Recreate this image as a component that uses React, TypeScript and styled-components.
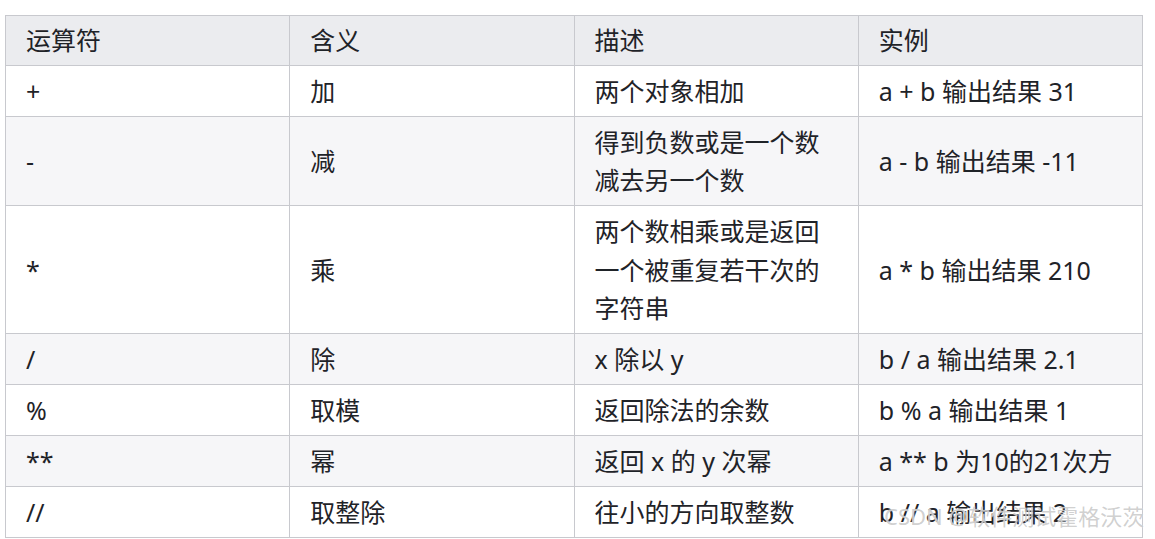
import { createGlobalStyle, styled } from 'styled-components'

const GlobalStyle = createGlobalStyle`
  html, body {
    margin: 0;
    padding: 0;
    background: #ffffff;
  }
  body {
    font-family: "Noto Sans", "Noto Sans CJK SC", sans-serif;
    color: #1f2328;
  }
`

type Row = {
  op: string
  meaning: string
  desc: string[]
  example: string
}

const rows: Row[] = [
  { op: '+', meaning: '加', desc: ['两个对象相加'], example: 'a + b 输出结果 31' },
  { op: '-', meaning: '减', desc: ['得到负数或是一个数', '减去另一个数'], example: 'a - b 输出结果 -11' },
  {
    op: '*',
    meaning: '乘',
    desc: ['两个数相乘或是返回', '一个被重复若干次的', '字符串'],
    example: 'a * b 输出结果 210',
  },
  { op: '/', meaning: '除', desc: ['x 除以 y'], example: 'b / a 输出结果 2.1' },
  { op: '%', meaning: '取模', desc: ['返回除法的余数'], example: 'b % a 输出结果 1' },
  { op: '**', meaning: '幂', desc: ['返回 x 的 y 次幂'], example: 'a ** b 为10的21次方' },
  { op: '//', meaning: '取整除', desc: ['往小的方向取整数'], example: 'b // a 输出结果 2' },
]

function App() {
  return (
    <Page>
      <GlobalStyle />
      <Table>
        <thead>
          <tr>
            <HeadCell>运算符</HeadCell>
            <HeadCell>含义</HeadCell>
            <HeadCell>描述</HeadCell>
            <HeadCell>实例</HeadCell>
          </tr>
        </thead>
        <tbody>
          {rows.map((r, i) => (
            <BodyRow key={r.op} striped={i % 2 === 1}>
              <Cell>{r.op}</Cell>
              <Cell>{r.meaning}</Cell>
              <Cell>
                {r.desc.map((line) => (
                  <Line key={line}>{line}</Line>
                ))}
              </Cell>
              <Cell>{r.example}</Cell>
            </BodyRow>
          ))}
        </tbody>
      </Table>
      <Watermark>CSDN @软件测试霍格沃茨</Watermark>
    </Page>
  )
}

export default App

const Page = styled.div`
  position: relative;
  width: 1155px;
  height: 539px;
  overflow: hidden;
  padding: 15px 0 0 5px;
  box-sizing: border-box;
`

const Table = styled.table`
  width: 1138px;
  table-layout: fixed;
  border-collapse: collapse;
  font-size: 25px;
  line-height: 38.5px;
`

const HeadCell = styled.th`
  background: #ebecef;
  border: 1px solid #c8c9ce;
  padding: 5px 20px;
  text-align: left;
  font-weight: 400;
  vertical-align: middle;
`

const BodyRow = styled.tr<{ striped: boolean }>`
  background: ${(p) => (p.striped ? '#f6f6f8' : '#ffffff')};
`

const Cell = styled.td`
  border: 1px solid #c8c9ce;
  padding: 6px 20px 5.5px;
  vertical-align: middle;
  white-space: nowrap;
`

const Line = styled.div`
  line-height: 38.5px;
`

const Watermark = styled.div`
  position: absolute;
  left: 884px;
  top: 499px;
  font-size: 22px;
  line-height: 34px;
  color: rgba(150, 150, 150, 0.45);
  text-shadow: 0 0 1px #ffffff;
  white-space: nowrap;
  pointer-events: none;
`
